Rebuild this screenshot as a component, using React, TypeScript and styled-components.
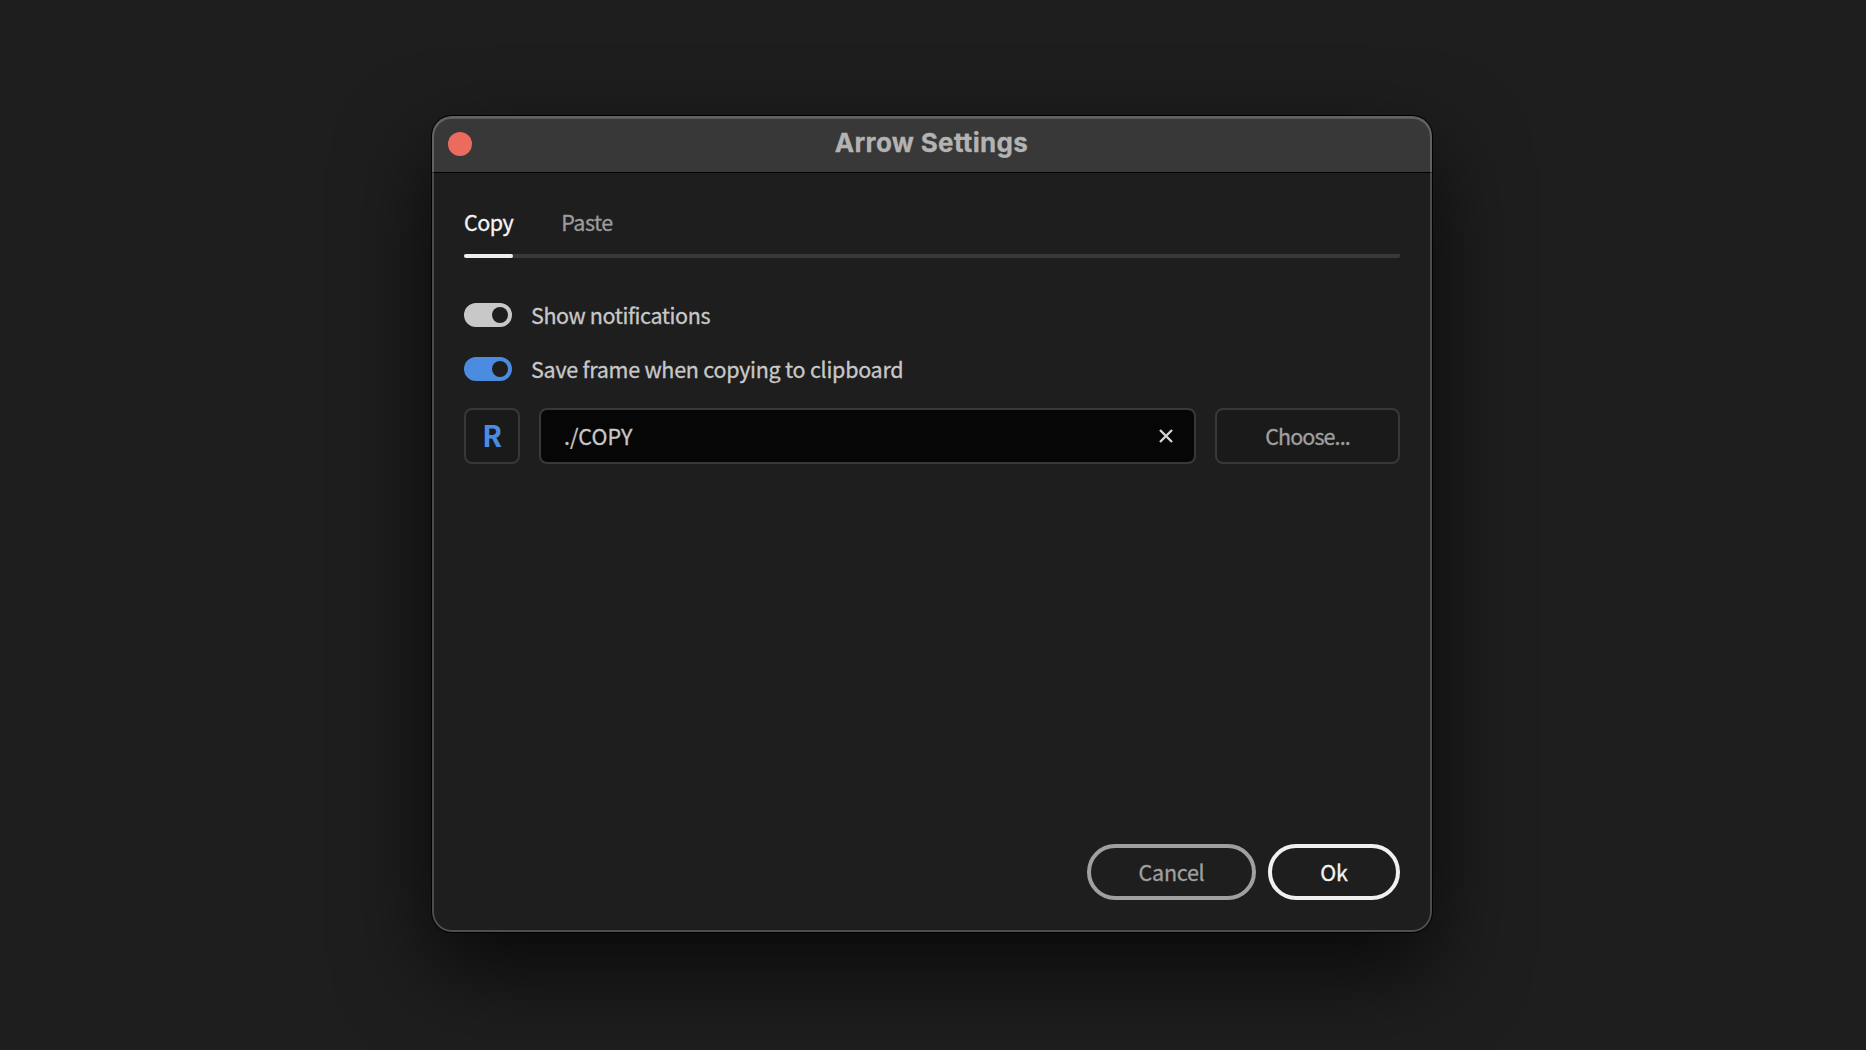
import React, { useState } from 'react';
import styled, { createGlobalStyle } from 'styled-components';

const GlobalStyle = createGlobalStyle`
  * { box-sizing: border-box; }
  body { margin: 0; background: #1e1e1e; }
  button, input { font: inherit; letter-spacing: inherit; margin: 0; }
`;

const Desktop = styled.main`
  display: flex;
  justify-content: center;
  height: 1050px;
  padding-top: 116px;
  background: #1e1e1e;
  overflow: hidden;
  font-family: 'Noto Sans CJK SC', 'Noto Sans', sans-serif;
  font-size: 21.5px;
  letter-spacing: -0.26px;
  line-height: 32px;
  color: #c8c8c8;
  -webkit-text-stroke: 0.3px currentColor;
`;

const Window = styled.section`
  position: relative;
  left: -1px;
  display: flex;
  flex-direction: column;
  width: 1000px;
  height: 816px;
  border-radius: 20px;
  background: #1e1e1e;
  overflow: hidden;
  box-shadow: 0 0 0 1px #000, 0 36px 90px rgba(0, 0, 0, 0.72);

  /* light rim drawn over the title bar and the body */
  &::after {
    content: '';
    position: absolute;
    inset: 0;
    border-radius: inherit;
    border: 2px solid rgba(255, 255, 255, 0.21);
    box-shadow: inset 0 1px 0 rgba(255, 255, 255, 0.16);
    pointer-events: none;
  }
`;

const TitleBar = styled.header`
  display: grid;
  grid-template-columns: 40px 1fr 40px;
  align-items: center;
  height: 57px;
  padding: 0 16px;
  background: #383838;
  border-bottom: 1px solid #000;
`;

const CloseButton = styled.button`
  width: 24px;
  height: 24px;
  padding: 0;
  border: 0;
  border-radius: 50%;
  background: #ed6a5e;
`;

const Title = styled.h1`
  margin: 0;
  padding: 0 1px 3px 0;
  font: 700 26px/32px Inter, sans-serif;
  letter-spacing: 0.33px;
  text-align: center;
  color: #b3b3b3;
`;

const Body = styled.div`
  display: flex;
  flex: 1;
  flex-direction: column;
  padding: 32px 32px;
`;

const Tabs = styled.nav`
  display: flex;
  gap: 48px;
  height: 53px;
  border-radius: 2px;
  background: linear-gradient(#383838, #383838) bottom / 100% 4px no-repeat;
`;

const Tab = styled.button<{ $active: boolean }>`
  display: flex;
  align-items: flex-start;
  padding: 1px 0 0;
  border: 0;
  background: none;
  line-height: 32px;
  letter-spacing: -0.5px;
  color: ${p => (p.$active ? '#f4f4f4' : '#9c9c9c')};
  position: relative;

  &::after {
    content: '';
    position: absolute;
    inset: auto 0 0;
    height: 4px;
    border-radius: 2px;
    background: ${p => (p.$active ? '#efefef' : 'transparent')};
  }
`;

const Options = styled.div`
  display: flex;
  flex-direction: column;
  gap: 22px;
  margin-top: 41px;
`;

const Option = styled.label`
  display: flex;
  align-items: center;
  gap: 19px;
  height: 32px;
`;

const Switch = styled.span<{ $accent?: boolean }>`
  display: flex;
  justify-content: flex-end;
  width: 48px;
  height: 24px;
  padding: 4px;
  border-radius: 12px;
  background: ${p => (p.$accent ? '#4b8ce0' : '#c8c8c8')};

  &::before {
    content: '';
    width: 16px;
    height: 16px;
    border-radius: 50%;
    background: #1e1e1e;
  }
`;

const OptionText = styled.span<{ $tracking?: number }>`
  padding-bottom: 1px;
  letter-spacing: ${p => p.$tracking ?? -0.26}px;
`;

const PathRow = styled.div`
  display: flex;
  gap: 19px;
  margin-top: 23px;
  height: 56px;
`;

const RelativeButton = styled.button`
  width: 56px;
  padding: 0 0 4px;
  border: 2px solid #383838;
  border-radius: 8px;
  background: #1a1a1a;
  font-size: 29px;
  font-weight: 700;
  color: #4b8ce0;
  -webkit-text-stroke: 0;
`;

const PathField = styled.div`
  display: flex;
  flex: 1;
  align-items: center;
  justify-content: space-between;
  padding: 0 20px 0 23px;
  border: 2px solid #383838;
  border-radius: 8px;
  background: #060606;
`;

const PathInput = styled.input`
  flex: 1;
  padding: 0;
  border: 0;
  outline: 0;
  background: none;
  line-height: 32px;
  letter-spacing: 0.1px;
  color: #c8c8c8;
`;

const ClearButton = styled.button`
  display: flex;
  padding: 0;
  border: 0;
  background: none;
  color: #d4d4d4;
`;

const ChooseButton = styled.button`
  width: 185px;
  padding: 0;
  border: 2px solid #383838;
  border-radius: 8px;
  background: #1a1a1a;
  letter-spacing: -0.9px;
  color: #a0a0a0;
`;

const Actions = styled.footer`
  display: flex;
  justify-content: flex-end;
  gap: 12px;
  margin-top: auto;
`;

const PillButton = styled.button<{ $primary?: boolean }>`
  width: ${p => (p.$primary ? 132 : 169)}px;
  height: 56px;
  padding: 0;
  border: 4px solid ${p => (p.$primary ? '#f0f0f0' : '#a0a0a0')};
  border-radius: 28px;
  background: none;
  color: ${p => (p.$primary ? '#f4f4f4' : '#a0a0a0')};
`;

const TABS = ['Copy', 'Paste'];

export default function App() {
  const [tab, setTab] = useState('Copy');
  const [path, setPath] = useState('./COPY');

  return (
    <Desktop>
      <GlobalStyle />
      <Window>
        <TitleBar>
          <CloseButton aria-label="Close" />
          <Title>Arrow Settings</Title>
        </TitleBar>
        <Body>
          <Tabs>
            {TABS.map(name => (
              <Tab key={name} $active={name === tab} onClick={() => setTab(name)}>
                {name}
              </Tab>
            ))}
          </Tabs>
          <Options>
            <Option>
              <Switch />
              <OptionText $tracking={-0.4}>Show notifications</OptionText>
            </Option>
            <Option>
              <Switch $accent />
              <OptionText>Save frame when copying to clipboard</OptionText>
            </Option>
          </Options>
          <PathRow>
            <RelativeButton>R</RelativeButton>
            <PathField>
              <PathInput value={path} onChange={e => setPath(e.target.value)} />
              <ClearButton aria-label="Clear" onClick={() => setPath('')}>
                <svg width="16" height="16" viewBox="0 0 16 16" fill="none" stroke="currentColor" strokeWidth="2.4">
                  <path d="M2 2 14 14M14 2 2 14" />
                </svg>
              </ClearButton>
            </PathField>
            <ChooseButton>Choose...</ChooseButton>
          </PathRow>
          <Actions>
            <PillButton>Cancel</PillButton>
            <PillButton $primary>Ok</PillButton>
          </Actions>
        </Body>
      </Window>
    </Desktop>
  );
}
